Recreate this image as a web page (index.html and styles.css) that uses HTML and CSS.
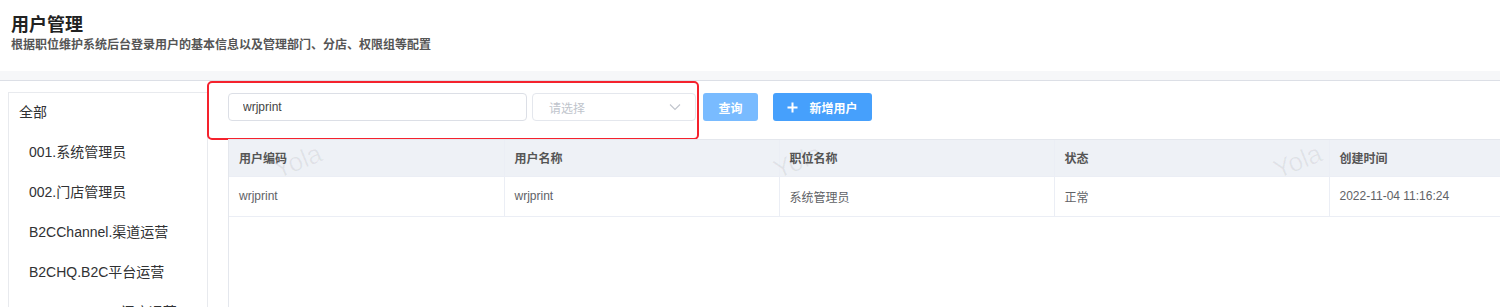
FILE: index.html
```html
<!DOCTYPE html>
<html lang="zh-CN">
<head>
    <meta charset="UTF-8">
    <title>用户管理</title>
    <link rel="stylesheet" href="styles.css">
</head>
<body>
    <header class="page-header">
        <h1>用户管理</h1>
        <p class="subtitle">根据职位维护系统后台登录用户的基本信息以及管理部门、分店、权限组等配置</p>
    </header>
    <div class="band"></div>

    <div class="main">
        <aside class="sidebar">
            <div class="tree-item root">全部</div>
            <div class="tree-item">001.系统管理员</div>
            <div class="tree-item">002.门店管理员</div>
            <div class="tree-item">B2CChannel.渠道运营</div>
            <div class="tree-item">B2CHQ.B2C平台运营</div>
            <div class="tree-item">B2CStore.B2C门店运营</div>
        </aside>

        <section class="content">
            <div class="toolbar">
                <div class="filters">
                    <input class="input" type="text" value="wrjprint">
                    <div class="select">
                        <span>请选择</span>
                        <svg width="12" height="8" viewBox="0 0 12 8"><path d="M1 1.5 L6 6.5 L11 1.5" fill="none" stroke="#c0c4cc" stroke-width="1.1"/></svg>
                    </div>
                </div>
                <button class="btn btn-disabled">查询</button>
                <button class="btn btn-primary">
                    <svg width="11" height="11" viewBox="0 0 11 11"><path d="M5.5 0.5 V10.5 M0.5 5.5 H10.5" stroke="#fff" stroke-width="2"/></svg>
                    新增用户
                </button>
            </div>

            <div class="table-wrap">
                <table class="table">
                    <thead>
                        <tr>
                            <th>用户编码</th>
                            <th>用户名称</th>
                            <th>职位名称</th>
                            <th>状态</th>
                            <th>创建时间</th>
                        </tr>
                    </thead>
                    <tbody>
                        <tr>
                            <td>wrjprint</td>
                            <td>wrjprint</td>
                            <td>系统管理员</td>
                            <td>正常</td>
                            <td>2022-11-04 11:16:24</td>
                        </tr>
                    </tbody>
                </table>
                <div class="watermarks">
                    <span class="mark m1">Yola</span>
                    <span class="mark m2">Yola</span>
                    <span class="mark m3">Yola</span>
                </div>
            </div>
        </section>
    </div>
</body>
</html>
```

FILE: styles.css
```css
* {
    margin: 0;
    padding: 0;
    box-sizing: border-box;
}

html, body {
    height: 100%;
    overflow: hidden;
}

body {
    font-family: "Liberation Sans", "Noto Sans CJK SC", sans-serif;
    color: #303133;
    background: #fff;
    display: flex;
    flex-direction: column;
}

.page-header {
    height: 71px;
    padding: 14px 11px 0;
}

.page-header h1 {
    font-size: 18px;
    line-height: 22px;
    font-weight: 700;
    color: #222;
}

.subtitle {
    margin-top: 1px;
    font-size: 12px;
    line-height: 16px;
    font-weight: 700;
    color: #555;
}

.band {
    height: 10px;
    background: #f6f7f9;
    border-bottom: 1px solid #dcdfe6;
}

.main {
    flex: 1;
    display: flex;
    padding-left: 8px;
    overflow: hidden;
}

.sidebar {
    width: 200px;
    flex-shrink: 0;
    margin-top: 11px;
    border: 1px solid #e8eaee;
    border-bottom: none;
}

.tree-item {
    height: 40px;
    line-height: 39px;
    padding-left: 20px;
    font-size: 14px;
    color: #303133;
    white-space: nowrap;
}

.tree-item.root {
    padding-left: 10px;
}

.content {
    flex: 1;
    margin-left: 20px;
    min-width: 0;
}

.toolbar {
    display: flex;
    align-items: center;
    margin-top: 12px;
}

.filters {
    position: relative;
    display: flex;
    gap: 5px;
}

.filters::after {
    content: "";
    position: absolute;
    left: -21px;
    top: -12px;
    width: 488px;
    height: 55px;
    border: 2px solid #f5222d;
    border-radius: 5px;
    pointer-events: none;
}

.input {
    width: 299px;
    height: 28px;
    border: 1px solid #dcdfe6;
    border-radius: 4px;
    padding: 0 14px;
    font-family: inherit;
    font-size: 12px;
    color: #444;
    outline: none;
}

.select {
    width: 164px;
    height: 28px;
    border: 1px solid #e4e7ed;
    border-radius: 4px;
    padding: 0 14px 0 16px;
    display: flex;
    align-items: center;
    justify-content: space-between;
    font-size: 12px;
    color: #c0c4cc;
}

.btn {
    height: 28px;
    border: none;
    border-radius: 3px;
    color: #fff;
    font-family: inherit;
    font-size: 12px;
    font-weight: 700;
    display: inline-flex;
    align-items: center;
    justify-content: center;
    gap: 11px;
}

.btn-disabled {
    width: 55px;
    margin-left: 7px;
    background: #79bbff;
}

.btn-primary {
    width: 99px;
    margin-left: 15px;
    background: #46a0fc;
}

.table-wrap {
    position: relative;
    margin-top: 18px;
    width: 1400px;
    height: 200px;
    border-left: 1px solid #e4e7ed;
    border-top: 1px solid #e4e7ed;
}

.table {
    border-collapse: collapse;
    table-layout: fixed;
    width: 100%;
    font-size: 12px;
}

.table th,
.table td {
    text-align: left;
    padding: 0 10px;
    border-right: 1px solid #ebeef5;
    border-bottom: 1px solid #ebeef5;
    white-space: nowrap;
}

.table th:nth-child(1), .table th:nth-child(2), .table th:nth-child(3), .table th:nth-child(4) {
    width: 275px;
}

.table th {
    height: 36px;
    background: #eef1f6;
    color: #555;
    font-weight: 700;
}

.table td {
    height: 40px;
    color: #606266;
}

.watermarks {
    position: absolute;
    inset: 0;
    pointer-events: none;
}

.mark {
    position: absolute;
    top: 6px;
    font-size: 26px;
    color: rgba(0, 0, 0, 0.06);
    transform: rotate(-22deg);
}

.m1 { left: 44px; }
.m2 { left: 544px; }
.m3 { left: 1044px; }
```
